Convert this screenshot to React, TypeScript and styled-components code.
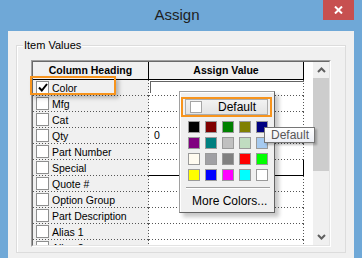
import styled, { createGlobalStyle, css } from "styled-components";

const GlobalStyle = createGlobalStyle`
  body {
    margin: 0;
    overflow: hidden;
  }
`;

const Frame = styled.div`
  width: 362px;
  height: 258px;
  background: #6fa8d7;
  display: flex;
  flex-direction: column;
  font-family: "Liberation Sans", Arial, sans-serif;
  color: #000;
  overflow: hidden;
`;

const TitleBar = styled.div`
  height: 31px;
  flex-shrink: 0;
  display: grid;
  grid-template-columns: 1fr auto 1fr;
  align-items: start;
  padding-right: 8px;
`;

const Title = styled.div`
  grid-column: 2;
  font-size: 15px;
  line-height: 29px;
  color: #1e1e1e;
`;

const CloseButton = styled.div`
  grid-column: 3;
  justify-self: end;
  width: 31px;
  height: 20px;
  background: #c75050;
  display: flex;
  align-items: center;
  justify-content: center;
`;

const Content = styled.div`
  flex: 1;
  min-height: 0;
  margin: 0 8px;
  background: #f0f0f0;
  padding: 14px 8px 5px;
  display: flex;
`;

const Group = styled.div`
  flex: 1;
  min-height: 0;
  position: relative;
  border: 1px solid #dcdcdc;
  box-shadow: inset 1px 1px 0 #fff;
  padding: 14px 14px 5px 14px;
  display: flex;
`;

const GroupLabel = styled.span`
  position: absolute;
  top: -7px;
  left: 6px;
  padding: 0 1px;
  background: #f0f0f0;
  font-size: 11px;
  line-height: 13px;
`;

const Highlight = styled.div<{ $shadow?: boolean }>`
  border: 2px solid #f7941d;
  box-sizing: border-box;
  ${(p) => p.$shadow && "box-shadow: 3px 3px 4px rgba(0, 0, 0, 0.25);"}
`;

const RowHighlight = styled(Highlight)`
  position: absolute;
  left: 13px;
  top: 30px;
  width: 86px;
  height: 19px;
`;

const GridOuter = styled.div`
  flex: 1;
  min-height: 0;
  display: flex;
  border-top: 1px solid #a0a0a0;
  border-left: 1px solid #a0a0a0;
  border-right: 1px solid #fff;
  border-bottom: 1px solid #fff;
`;

const GridInner = styled.div`
  flex: 1;
  min-height: 0;
  position: relative;
  display: flex;
  overflow: hidden;
  border-top: 1px solid #696969;
  border-left: 1px solid #696969;
  border-right: 1px solid #e3e3e3;
  border-bottom: 1px solid #e3e3e3;
`;

const Table = styled.div`
  flex: 1;
  min-height: 0;
  background: #fff;
  display: flex;
  flex-direction: column;
  overflow: hidden;
`;

const columns = "116px 155px 1fr";

const HeaderRow = styled.div`
  display: grid;
  grid-template-columns: ${columns};
  height: 18px;
  flex-shrink: 0;
`;

const HeaderCell = styled.div`
  background: #f0f0f0;
  border-right: 1px solid #000;
  border-bottom: 1px solid #000;
  font-size: 10.5px;
  font-weight: bold;
  text-align: center;
  line-height: 17px;
`;

const Row = styled.div`
  display: grid;
  grid-template-columns: ${columns};
  height: 16px;
  flex-shrink: 0;
`;

const dotted = css`
  background-image: repeating-linear-gradient(to right, #555 0 1px, transparent 1px 3px),
    repeating-linear-gradient(to bottom, #555 0 1px, transparent 1px 3px);
  background-size: 100% 1px, 1px 100%;
  background-position: left bottom, right top;
  background-repeat: no-repeat;
`;

const NameCell = styled.div`
  ${dotted};
  background-color: #f0f0f0;
  display: flex;
  align-items: center;
  gap: 3px;
  padding: 0 0 1px 3px;
  font-size: 10.5px;
`;

const ValueCell = styled.div<{ $selected?: boolean }>`
  ${dotted};
  background-color: #fff;
  box-sizing: border-box;
  padding-left: 5px;
  font-size: 10.5px;
  line-height: 15px;
  ${(p) =>
    p.$selected &&
    css`
      background-image: none;
      border-right: 1px solid #000;
      border-bottom: 1px solid #000;
    `}
`;

const EditFrame = styled.div`
  margin: 1px 0 0 -4px;
  height: 11px;
  border-top: 1px solid #646464;
  border-left: 1px solid #646464;
`;

const Check = styled.div`
  width: 13px;
  height: 13px;
  box-sizing: border-box;
  border: 1px solid #8e8f8f;
  background: #fff;
  flex-shrink: 0;
  display: flex;
  align-items: center;
  justify-content: center;
`;

const Scrollbar = styled.div`
  width: 16px;
  background: #f0f0f0;
  display: flex;
  flex-direction: column;
  align-items: stretch;
`;

const ScrollButton = styled.div`
  height: 16px;
  flex-shrink: 0;
  display: flex;
  align-items: center;
  justify-content: center;
`;

const Thumb = styled.div`
  height: 93px;
  flex-shrink: 0;
  background: #cdcdcd;
`;

const Track = styled.div`
  flex: 1;
`;

const Popup = styled.div`
  position: absolute;
  left: 146px;
  top: 29px;
  width: 96px;
  height: 122px;
  box-sizing: border-box;
  background: #f0f0f0;
  border: 1px solid #a0a0a0;
  border-right-color: #646464;
  border-bottom-color: #646464;
  box-shadow: inset 1px 1px 0 #fff, 4px 4px 4px rgba(0, 0, 0, 0.22);
  padding: 5px 0 0 1px;
`;

const DefaultBox = styled(Highlight)`
  width: 91px;
  height: 20px;
  padding: 0 2px;
  display: flex;
`;

const DefaultButton = styled.div`
  flex: 1;
  border: 1px solid #acacac;
  background: linear-gradient(#f2f2f2, #e3e3e3);
  display: flex;
  align-items: center;
  padding-left: 4px;
  font-size: 12px;
`;

const Blank = styled.div`
  width: 12px;
  height: 12px;
  box-sizing: border-box;
  border: 1px solid #a5a5a5;
  background: #fff;
  margin-right: 16px;
`;

const Swatches = styled.div`
  display: grid;
  grid-template-columns: repeat(5, 12px);
  grid-auto-rows: 12px;
  column-gap: 5px;
  row-gap: 4px;
  margin: 4px 0 0 7px;
`;

const Swatch = styled.div<{ $color: string }>`
  box-sizing: border-box;
  border: 1px solid #9a9a9a;
  background: ${(p) => p.$color};
`;

const Separator = styled.div`
  margin: 6px 0 0 5px;
  width: 84px;
  border-top: 1px solid #a0a0a0;
  border-bottom: 1px solid #fff;
`;

const MoreColors = styled.div`
  font-size: 12px;
  line-height: 21px;
  margin-top: 2px;
  padding-left: 11px;
`;

const Tooltip = styled.div`
  position: absolute;
  left: 231px;
  top: 65px;
  width: 51px;
  height: 16px;
  box-sizing: border-box;
  border: 1px solid #767676;
  background: linear-gradient(#ffffff, #eceef4);
  box-shadow: 2px 2px 2px rgba(0, 0, 0, 0.25);
  color: #575757;
  font-size: 12px;
  line-height: 14px;
  padding-left: 6px;
`;

const rows = [
  { name: "Color", checked: true, edit: true },
  { name: "Mfg" },
  { name: "Cat" },
  { name: "Qty", value: "0" },
  { name: "Part Number" },
  { name: "Special", selected: true },
  { name: "Quote #" },
  { name: "Option Group" },
  { name: "Part Description" },
  { name: "Alias 1" },
  { name: "Alias 2" },
];

const palette = [
  "#000000", "#800000", "#008000", "#808000", "#000080",
  "#800080", "#008080", "#c0c0c0", "#c0dcc0", "#a6caf0",
  "#fffbf0", "#a0a0a4", "#808080", "#ff0000", "#00ff00",
  "#ffff00", "#0000ff", "#ff00ff", "#00ffff", "#ffffff",
];

function Chevron({ down }: { down?: boolean }) {
  return (
    <svg width="9" height="6" viewBox="0 0 9 6">
      <path
        d={down ? "M1 1 L4.5 4.5 L8 1" : "M1 5 L4.5 1.5 L8 5"}
        fill="none"
        stroke="#606060"
        strokeWidth="2"
      />
    </svg>
  );
}

export default function App() {
  return (
    <Frame>
      <GlobalStyle />
      <TitleBar>
        <Title>Assign</Title>
        <CloseButton>
          <svg width="9" height="8" viewBox="0 0 9 8">
            <path d="M1 0.5 L8 7.5 M8 0.5 L1 7.5" stroke="#fff" strokeWidth="2" />
          </svg>
        </CloseButton>
      </TitleBar>
      <Content>
        <Group>
          <GroupLabel>Item Values</GroupLabel>
          <GridOuter>
            <GridInner>
              <Table>
                <HeaderRow>
                  <HeaderCell>Column Heading</HeaderCell>
                  <HeaderCell>Assign Value</HeaderCell>
                  <div />
                </HeaderRow>
                {rows.map((r) => (
                  <Row key={r.name}>
                    <NameCell>
                      <Check>
                        {r.checked && (
                          <svg width="10" height="9" viewBox="0 0 10 9">
                            <path d="M1 4.5 L3.8 7.5 L9 1" fill="none" stroke="#000" strokeWidth="2" />
                          </svg>
                        )}
                      </Check>
                      {r.name}
                    </NameCell>
                    <ValueCell $selected={r.selected}>
                      {r.edit ? <EditFrame /> : r.value}
                    </ValueCell>
                    <div />
                  </Row>
                ))}
              </Table>
              <Scrollbar>
                <ScrollButton>
                  <Chevron />
                </ScrollButton>
                <Thumb />
                <Track />
                <ScrollButton>
                  <Chevron down />
                </ScrollButton>
              </Scrollbar>
              <Popup>
                <DefaultBox>
                  <DefaultButton>
                    <Blank />
                    Default
                  </DefaultButton>
                </DefaultBox>
                <Swatches>
                  {palette.map((c, i) => (
                    <Swatch key={i} $color={c} />
                  ))}
                </Swatches>
                <Separator />
                <MoreColors>More Colors...</MoreColors>
              </Popup>
              <Tooltip>Default</Tooltip>
            </GridInner>
          </GridOuter>
          <RowHighlight $shadow />
        </Group>
      </Content>
    </Frame>
  );
}
